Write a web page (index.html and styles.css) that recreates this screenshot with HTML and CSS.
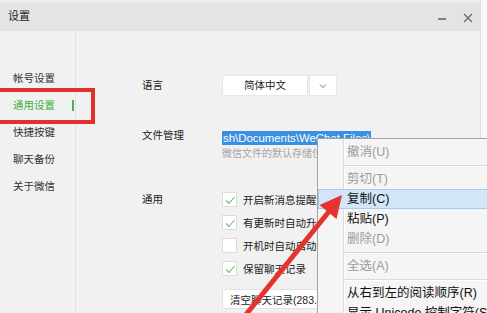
FILE: index.html
```html
<!DOCTYPE html>
<html lang="zh-CN">
<head>
    <meta charset="UTF-8">
    <title>设置</title>
    <link rel="stylesheet" href="styles.css">
</head>
<body>
    <div class="window">
        <!-- Title bar -->
        <div class="titlebar">
            <span class="title">设置</span>
            <div class="controls">
                <svg class="ctrl" width="10" height="10" viewBox="0 0 10 10"><line x1="1" y1="6" x2="9" y2="6" stroke="#555" stroke-width="1.4"/></svg>
                <svg class="ctrl" width="10" height="10" viewBox="0 0 10 10"><path d="M1 1 L9 9 M9 1 L1 9" stroke="#666" stroke-width="1.3" fill="none"/></svg>
            </div>
        </div>

        <div class="frame">
            <!-- Sidebar -->
            <nav class="sidebar">
                <div class="nav-item">帐号设置</div>
                <div class="nav-item active">通用设置</div>
                <div class="nav-item">快捷按键</div>
                <div class="nav-item">聊天备份</div>
                <div class="nav-item">关于微信</div>
            </nav>

            <!-- Settings panel -->
            <main class="panel">
                <div class="row row-lang">
                    <div class="label">语言</div>
                    <div class="select">
                        <span class="select-value">简体中文</span>
                        <span class="select-arrow">
                            <svg width="8" height="6" viewBox="0 0 8 6"><path d="M1 1.5 L4 4.5 L7 1.5" stroke="#777" stroke-width="1" fill="none"/></svg>
                        </span>
                    </div>
                </div>

                <div class="row row-file">
                    <div class="label">文件管理</div>
                    <div class="field">
                        <div class="path"><span class="selected">sh\Documents\WeChat Files\</span></div>
                        <div class="hint">微信文件的默认存储位置</div>
                    </div>
                </div>

                <div class="row row-general">
                    <div class="label">通用</div>
                    <div class="options">
                        <div class="check-row"><span class="box checked"><svg width="12" height="12" viewBox="0 0 12 12"><path d="M2 6.5 L5 9.5 L10.5 3" stroke="#6cbf6a" stroke-width="1.1" fill="none"/></svg></span>开启新消息提醒</div>
                        <div class="check-row"><span class="box checked"><svg width="12" height="12" viewBox="0 0 12 12"><path d="M2 6.5 L5 9.5 L10.5 3" stroke="#6cbf6a" stroke-width="1.1" fill="none"/></svg></span>有更新时自动升级</div>
                        <div class="check-row"><span class="box"></span>开机时自动启动</div>
                        <div class="check-row"><span class="box checked"><svg width="12" height="12" viewBox="0 0 12 12"><path d="M2 6.5 L5 9.5 L10.5 3" stroke="#6cbf6a" stroke-width="1.1" fill="none"/></svg></span>保留聊天记录</div>
                        <button class="btn">清空聊天记录(283.5M)</button>
                    </div>
                </div>
            </main>
        </div>

        <!-- Annotation: red highlight box -->
        <div class="mark-box"></div>

        <!-- Context menu -->
        <div class="context-menu">
            <div class="menu-item disabled">撤消(U)</div>
            <div class="menu-sep"></div>
            <div class="menu-item disabled">剪切(T)</div>
            <div class="menu-item hover">复制(C)</div>
            <div class="menu-item">粘贴(P)</div>
            <div class="menu-item disabled">删除(D)</div>
            <div class="menu-sep"></div>
            <div class="menu-item disabled">全选(A)</div>
            <div class="menu-sep"></div>
            <div class="menu-item">从右到左的阅读顺序(R)</div>
            <div class="menu-item">显示 Unicode 控制字符(S)</div>
        </div>

        <!-- Annotation: red arrow -->
        <svg class="mark-arrow" width="487" height="313" viewBox="0 0 487 313">
            <line x1="240" y1="322" x2="331" y2="209" stroke="#e5332f" stroke-width="5"/>
            <polygon points="342,195 319.5,205 336.5,219" fill="#e5332f"/>
        </svg>
    </div>
</body>
</html>
```

FILE: styles.css
```css
body {
    margin: 0;
    padding: 0;
    font-family: "Liberation Sans", "Noto Sans CJK SC", sans-serif;
    background: #f7f7f7;
    width: 487px;
    height: 313px;
    overflow: hidden;
}

.window {
    position: relative;
    width: 480px;
    height: 313px;
    background: #f1f1f1;
    border-right: 1px solid #dedede;
}

/* Title bar */
.titlebar {
    height: 28px;
    border-top: 3px solid #ededed;
    background: #e4e4e4;
    display: flex;
    align-items: center;
    justify-content: space-between;
    padding: 0 7px 0 8px;
}

.title {
    font-size: 11px;
    color: #222;
    margin-top: -4px;
}

.controls {
    display: flex;
    gap: 16px;
    margin-top: 2px;
}

/* Body */
.frame {
    display: flex;
    height: 282px;
}

.sidebar {
    width: 76px;
    border-right: 1px solid #e3e3e3;
    padding-top: 34px;
    box-sizing: border-box;
}

.nav-item {
    position: relative;
    height: 27px;
    line-height: 27px;
    padding-left: 13px;
    font-size: 10.5px;
    color: #333;
}

.nav-item.active {
    color: #3dae3b;
}

.nav-item.active::after {
    content: "";
    position: absolute;
    right: 1px;
    top: 8px;
    width: 2px;
    height: 11px;
    background: #4bb449;
}

.panel {
    flex: 1;
    padding: 44px 0 0 66px;
}

.row {
    display: flex;
}

.label {
    width: 80px;
    font-size: 10.5px;
    color: #222;
}

.row-lang .label {
    line-height: 21px;
}

.select {
    display: flex;
    gap: 1px;
    height: 21px;
}

.select-value {
    width: 84px;
    background: #fff;
    border: 1px solid #e8e8e8;
    font-size: 10.5px;
    color: #222;
    text-align: center;
    line-height: 19px;
}

.select-arrow {
    width: 26px;
    background: #fff;
    border: 1px solid #e8e8e8;
    display: flex;
    align-items: center;
    justify-content: center;
}

.row-file {
    margin-top: 32px;
}

.row-file .label {
    line-height: 14px;
}

.path {
    height: 14px;
}

.selected {
    display: inline-block;
    height: 14px;
    line-height: 14px;
    background: #3b8fe0;
    color: #fff;
    font-size: 11.4px;
    padding: 0 1px;
}

.hint {
    margin-top: 5px;
    font-size: 10px;
    color: #a3a3a3;
    line-height: 14px;
    white-space: nowrap;
}

.row-general {
    margin-top: 27px;
}

.row-general .label {
    line-height: 23px;
}

.check-row {
    display: flex;
    align-items: center;
    gap: 6px;
    height: 23px;
    font-size: 10.5px;
    color: #222;
    white-space: nowrap;
}

.box {
    width: 13px;
    height: 13px;
    background: #fff;
    border: 1px solid #dcdcdc;
    display: flex;
    align-items: center;
    justify-content: center;
}

.btn {
    margin-top: 9px;
    height: 20px;
    padding: 0 7px;
    background: #fff;
    border: 1px solid #e2e2e2;
    font-family: inherit;
    font-size: 10.5px;
    color: #222;
    white-space: nowrap;
}

/* Annotation box */
.mark-box {
    position: absolute;
    left: -4px;
    top: 88px;
    width: 91px;
    height: 28px;
    border: 4px solid #e2302c;
}

/* Context menu */
.context-menu {
    position: absolute;
    left: 317px;
    top: 138px;
    width: 170px;
    height: 175px;
    overflow: hidden;
    background: #f5f5f5;
    border: 1px solid #a2a2a2;
    border-right: none;
    border-bottom: none;
    padding-top: 3px;
    box-sizing: border-box;
    background-image: linear-gradient(90deg, transparent 25px, #dcdcdc 25px, #dcdcdc 26px, #fff 26px, #fff 27px, transparent 27px);
}

.menu-item {
    height: 20px;
    line-height: 20px;
    padding-left: 29px;
    font-size: 12.5px;
    color: #111;
    white-space: nowrap;
    box-sizing: border-box;
}

.menu-item.disabled {
    color: #9b9b9b;
}

.menu-item.hover {
    background: #d3e6f8;
    border: 1px solid #a6cbee;
    border-right: none;
    line-height: 18px;
    padding-left: 28px;
}

.menu-sep {
    height: 7px;
    margin-left: 26px;
    background: linear-gradient(#f5f5f5 3px, #d9d9d9 3px, #d9d9d9 4px, #fff 4px, #fff 5px, #f5f5f5 5px);
}

/* Annotation arrow */
.mark-arrow {
    position: absolute;
    left: 0;
    top: 0;
}
```
